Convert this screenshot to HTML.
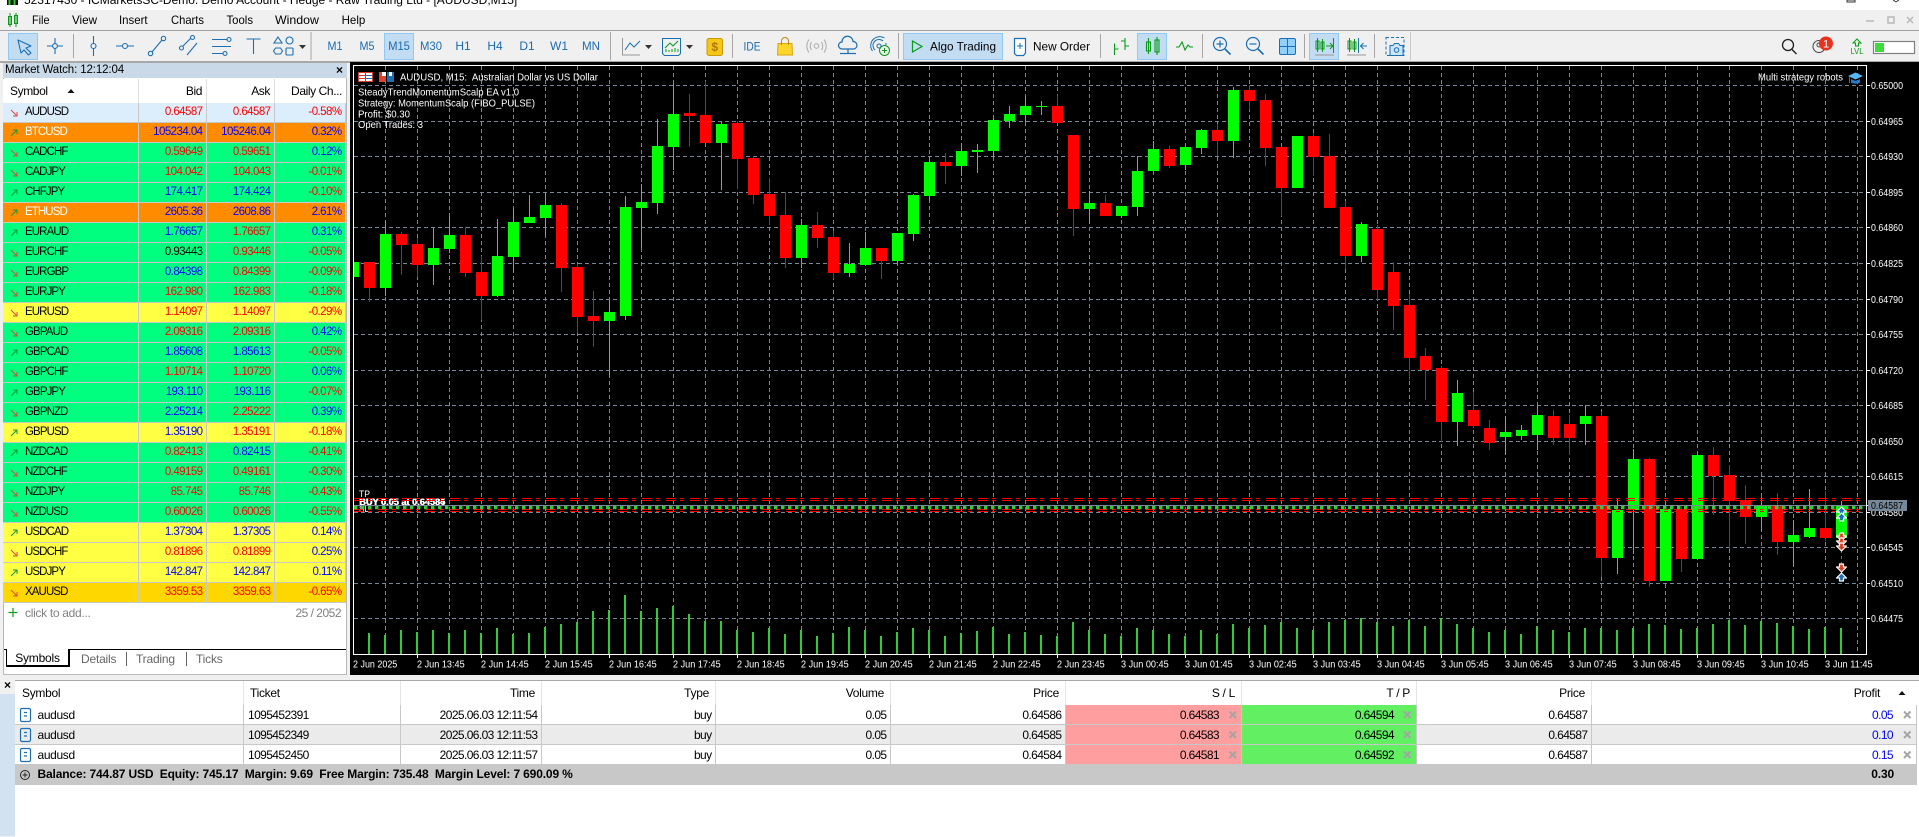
<!DOCTYPE html>
<html lang="en"><head><meta charset="utf-8"><title>MetaTrader 5</title>
<style>
html,body{margin:0;padding:0;width:1919px;height:836px;overflow:hidden;background:#f0f0f0;font-family:"Liberation Sans",sans-serif;color:#000}
.abs{position:absolute}
#title{left:0;top:0;width:1919px;height:10px;background:#fff;overflow:hidden}
#title span{position:absolute;left:24px;top:-7px;font-size:12px;line-height:14px;white-space:nowrap;letter-spacing:-.02px}
#menu{left:0;top:10px;width:1919px;height:20px;background:#f0f0f0;border-bottom:1px solid #a0a0a0}
#tool{left:0;top:31px;width:1919px;height:30px;background:#f0f0f0;border-bottom:2px solid #a8a8a8}
.sel{position:absolute;top:33px;height:25px;background:#c2dcf2;border:1px solid #90c8f6}
#mwt{left:3px;top:63px;width:344px;height:15px;background:#c9d9e7;font-size:11.5px;line-height:15px}
#mwt span{position:absolute;left:2px;top:0;white-space:nowrap;letter-spacing:-.12px}
#mwt b{position:absolute;right:4px;top:0;font-size:12px}
#mw{left:3px;top:78px;width:344px;height:597px;background:#fff;border-left:1px solid #b8b8b8;border-right:1px solid #b8b8b8;border-bottom:1px solid #b8b8b8;box-sizing:border-box}
table{border-collapse:separate;border-spacing:0;table-layout:fixed}
#mwtab{position:absolute;left:-1px;top:1px;width:343px;font-size:11.5px;letter-spacing:-.56px}
#mwtab th{height:24px;font-weight:normal;background:#fff;border-right:1px solid #e0e0e0;text-align:right;padding:0 4px 0 0;box-sizing:border-box;font-size:12px;letter-spacing:-.4px}
#mwtab td{height:20px;padding:0 3.5px 0 0;box-sizing:border-box;text-align:right;border-right:1px solid #c8c8c8;border-bottom:1px solid #c8c8c8;white-space:nowrap;overflow:hidden;line-height:19px}
#mwtab td:first-child{text-align:left;padding-left:22px;letter-spacing:-.9px;position:relative}
#mwtab td:first-child svg{position:absolute;left:7px;top:6px;width:8px;height:8px}
.u path{stroke:#159a30;fill:none;stroke-width:1}.d path{stroke:#e0483c;fill:none;stroke-width:1}
.l{background:#dcedfb}.o{background:#ff8c00}.o td:first-child{color:#fff}.g{background:#00ff7f}.y{background:#ffff44}.a{background:#ffd700}
.r{color:#f00}.b{color:#00f}
#add{left:25px;top:606px;font-size:12px;color:#808080;letter-spacing:-.3px}
#cnt{left:290px;top:606px;width:51px;text-align:right;font-size:12px;color:#808080;letter-spacing:-.5px;white-space:nowrap}
.tabline{left:4px;top:649px;width:342px;height:1px;background:#000}
#tsym{left:6px;top:649px;width:64px;height:18px;background:#fff;border:1px solid #000;border-top:0;box-sizing:border-box;border-width:0 2px 2px 1px;font-size:12px;text-align:center;line-height:19px;letter-spacing:-.2px}
.tab{top:652px;font-size:12px;color:#666;line-height:14px;letter-spacing:-.2px}
.tsep{top:652px;width:1px;height:14px;background:#666}
#side{left:0;top:694px;width:15px;height:142px;background:#d3e2f0}
#tbx{left:15px;top:680px;width:1904px;height:156px;background:#fff;border-top:1px solid #a8a8a8}
#ot{position:absolute;left:0;top:0;width:1902px;font-size:12px;letter-spacing:-.6px}
#ot th{height:24px;font-weight:normal;text-align:right;padding:0 6px 0 0;border-right:1px solid #e6e6e6;box-sizing:border-box;letter-spacing:-.3px}
#ot td{height:20px;padding:1px 3.5px 0 0;text-align:right;border-right:1px solid #c8c8c8;border-bottom:1px solid #c8c8c8;box-sizing:border-box;position:relative;line-height:18px;white-space:nowrap}
#ot td.sym{text-align:left;padding-left:22.5px;letter-spacing:-.35px}
#ot td.tk{text-align:left;padding-left:4px}
#ot .x{background:#ebebeb}
#ot td.sl{background:#ff9e9e;padding-right:22px}#ot td.tp{background:#62f062;padding-right:22px}
#ot td.pf{padding-right:23px;color:#00f}
#sum{left:15px;top:764px;width:1902px;height:21px;background:#c8c8c8;font-size:12px;font-weight:bold;line-height:21px;white-space:pre;letter-spacing:-.15px}
#sum span{position:absolute;left:22.5px}
#sum em{position:absolute;right:23px;font-style:normal}
#ico{left:0;top:0;width:1919px;height:836px}
</style></head><body>
<div class="abs" id="title"><span>52317430 - ICMarketsSC-Demo: Demo Account - Hedge - Raw Trading Ltd - [AUDUSD,M15]</span></div>
<div class="abs" id="menu"></div>
<div class="abs" id="tool"></div>
<div class="sel" style="left:8px;width:28px"></div>
<div class="sel" style="left:384px;width:28px"></div>
<div class="sel" style="left:903px;width:98px"></div>
<div class="sel" style="left:1137px;width:28px"></div>
<div class="sel" style="left:1309px;width:28px"></div>

<div class="abs" id="mwt"><span>Market Watch: 12:12:04</span><b>×</b></div>
<div class="abs" id="mw">
<table id="mwtab"><colgroup><col style="width:136px"><col style="width:68px"><col style="width:68px"><col style="width:71px"></colgroup>
<tr><th style="text-align:left;padding-left:7px">Symbol</th><th>Bid</th><th>Ask</th><th style="border-right:0">Daily Ch...</th></tr>
<tr class="l"><td><svg class="d" viewBox="0 0 8 8"><path d="M1 1L7 7M3 7h4V3"/></svg>AUDUSD</td><td class="r">0.64587</td><td class="r">0.64587</td><td class="r">-0.58%</td></tr>
<tr class="o"><td><svg class="u" viewBox="0 0 8 8"><path d="M1 7L7 1M3 1h4v4"/></svg>BTCUSD</td><td class="b">105234.04</td><td class="b">105246.04</td><td class="b">0.32%</td></tr>
<tr class="g"><td><svg class="d" viewBox="0 0 8 8"><path d="M1 1L7 7M3 7h4V3"/></svg>CADCHF</td><td class="r">0.59649</td><td class="r">0.59651</td><td class="b">0.12%</td></tr>
<tr class="g"><td><svg class="d" viewBox="0 0 8 8"><path d="M1 1L7 7M3 7h4V3"/></svg>CADJPY</td><td class="r">104.042</td><td class="r">104.043</td><td class="r">-0.01%</td></tr>
<tr class="g"><td><svg class="u" viewBox="0 0 8 8"><path d="M1 7L7 1M3 1h4v4"/></svg>CHFJPY</td><td class="b">174.417</td><td class="b">174.424</td><td class="r">-0.10%</td></tr>
<tr class="o"><td><svg class="u" viewBox="0 0 8 8"><path d="M1 7L7 1M3 1h4v4"/></svg>ETHUSD</td><td class="b">2605.36</td><td class="b">2608.86</td><td class="b">2.61%</td></tr>
<tr class="g"><td><svg class="u" viewBox="0 0 8 8"><path d="M1 7L7 1M3 1h4v4"/></svg>EURAUD</td><td class="b">1.76657</td><td class="r">1.76657</td><td class="b">0.31%</td></tr>
<tr class="g"><td><svg class="d" viewBox="0 0 8 8"><path d="M1 1L7 7M3 7h4V3"/></svg>EURCHF</td><td>0.93443</td><td class="r">0.93446</td><td class="r">-0.05%</td></tr>
<tr class="g"><td><svg class="d" viewBox="0 0 8 8"><path d="M1 1L7 7M3 7h4V3"/></svg>EURGBP</td><td class="b">0.84398</td><td class="r">0.84399</td><td class="r">-0.09%</td></tr>
<tr class="g"><td><svg class="d" viewBox="0 0 8 8"><path d="M1 1L7 7M3 7h4V3"/></svg>EURJPY</td><td class="r">162.980</td><td class="r">162.983</td><td class="r">-0.18%</td></tr>
<tr class="y"><td><svg class="d" viewBox="0 0 8 8"><path d="M1 1L7 7M3 7h4V3"/></svg>EURUSD</td><td class="r">1.14097</td><td class="r">1.14097</td><td class="r">-0.29%</td></tr>
<tr class="g"><td><svg class="d" viewBox="0 0 8 8"><path d="M1 1L7 7M3 7h4V3"/></svg>GBPAUD</td><td class="r">2.09316</td><td class="r">2.09316</td><td class="b">0.42%</td></tr>
<tr class="g"><td><svg class="u" viewBox="0 0 8 8"><path d="M1 7L7 1M3 1h4v4"/></svg>GBPCAD</td><td class="b">1.85608</td><td class="b">1.85613</td><td class="r">-0.05%</td></tr>
<tr class="g"><td><svg class="d" viewBox="0 0 8 8"><path d="M1 1L7 7M3 7h4V3"/></svg>GBPCHF</td><td class="r">1.10714</td><td class="r">1.10720</td><td class="b">0.06%</td></tr>
<tr class="g"><td><svg class="u" viewBox="0 0 8 8"><path d="M1 7L7 1M3 1h4v4"/></svg>GBPJPY</td><td class="b">193.110</td><td class="b">193.116</td><td class="r">-0.07%</td></tr>
<tr class="g"><td><svg class="d" viewBox="0 0 8 8"><path d="M1 1L7 7M3 7h4V3"/></svg>GBPNZD</td><td class="b">2.25214</td><td class="r">2.25222</td><td class="b">0.39%</td></tr>
<tr class="y"><td><svg class="u" viewBox="0 0 8 8"><path d="M1 7L7 1M3 1h4v4"/></svg>GBPUSD</td><td class="b">1.35190</td><td class="r">1.35191</td><td class="r">-0.18%</td></tr>
<tr class="g"><td><svg class="u" viewBox="0 0 8 8"><path d="M1 7L7 1M3 1h4v4"/></svg>NZDCAD</td><td class="r">0.82413</td><td class="b">0.82415</td><td class="r">-0.41%</td></tr>
<tr class="g"><td><svg class="d" viewBox="0 0 8 8"><path d="M1 1L7 7M3 7h4V3"/></svg>NZDCHF</td><td class="r">0.49159</td><td class="r">0.49161</td><td class="r">-0.30%</td></tr>
<tr class="g"><td><svg class="d" viewBox="0 0 8 8"><path d="M1 1L7 7M3 7h4V3"/></svg>NZDJPY</td><td class="r">85.745</td><td class="r">85.746</td><td class="r">-0.43%</td></tr>
<tr class="g"><td><svg class="d" viewBox="0 0 8 8"><path d="M1 1L7 7M3 7h4V3"/></svg>NZDUSD</td><td class="r">0.60026</td><td class="r">0.60026</td><td class="r">-0.55%</td></tr>
<tr class="y"><td><svg class="u" viewBox="0 0 8 8"><path d="M1 7L7 1M3 1h4v4"/></svg>USDCAD</td><td class="b">1.37304</td><td class="b">1.37305</td><td class="b">0.14%</td></tr>
<tr class="y"><td><svg class="d" viewBox="0 0 8 8"><path d="M1 1L7 7M3 7h4V3"/></svg>USDCHF</td><td class="r">0.81896</td><td class="r">0.81899</td><td class="b">0.25%</td></tr>
<tr class="y"><td><svg class="u" viewBox="0 0 8 8"><path d="M1 7L7 1M3 1h4v4"/></svg>USDJPY</td><td class="b">142.847</td><td class="b">142.847</td><td class="b">0.11%</td></tr>
<tr class="a"><td><svg class="d" viewBox="0 0 8 8"><path d="M1 1L7 7M3 7h4V3"/></svg>XAUUSD</td><td class="r">3359.53</td><td class="r">3359.63</td><td class="r">-0.65%</td></tr>
</table></div>
<div class="abs" id="add">click to add...</div>
<div class="abs" id="cnt">25 / 2052</div>
<div class="abs tabline"></div>
<div class="abs" id="tsym">Symbols</div>
<div class="abs tab" style="left:81px">Details</div><div class="abs tsep" style="left:126px"></div>
<div class="abs tab" style="left:136px">Trading</div><div class="abs tsep" style="left:186px"></div>
<div class="abs tab" style="left:196px">Ticks</div>

<!-- chart background -->
<div class="abs" style="left:350px;top:62px;width:1569px;height:613px;background:#000"></div>

<div class="abs" id="side"></div>
<div class="abs" id="tbx">
<table id="ot"><colgroup><col style="width:229px"><col style="width:157px"><col style="width:141px"><col style="width:174px"><col style="width:175px"><col style="width:175px"><col style="width:176px"><col style="width:175px"><col style="width:175px"><col style="width:325px"></colgroup>
<tr><th style="text-align:left;padding-left:7px">Symbol</th><th style="text-align:left;padding-left:6px">Ticket</th><th>Time</th><th>Type</th><th>Volume</th><th>Price</th><th>S / L</th><th>T / P</th><th>Price</th><th style="padding-right:37px;border-right:0">Profit</th></tr>
<tr><td class="sym">audusd</td><td class="tk">1095452391</td><td>2025.06.03 12:11:54</td><td>buy</td><td>0.05</td><td>0.64586</td><td class="sl">0.64583</td><td class="tp">0.64594</td><td>0.64587</td><td class="pf">0.05</td></tr>
<tr class="x"><td class="sym">audusd</td><td class="tk">1095452349</td><td>2025.06.03 12:11:53</td><td>buy</td><td>0.05</td><td>0.64585</td><td class="sl">0.64583</td><td class="tp">0.64594</td><td>0.64587</td><td class="pf">0.10</td></tr>
<tr><td class="sym">audusd</td><td class="tk">1095452450</td><td>2025.06.03 12:11:57</td><td>buy</td><td>0.05</td><td>0.64584</td><td class="sl">0.64581</td><td class="tp">0.64592</td><td>0.64587</td><td class="pf">0.15</td></tr>
</table></div>
<div class="abs" id="sum"><span>Balance: 744.87 USD  Equity: 745.17  Margin: 9.69  Free Margin: 735.48  Margin Level: 7 690.09 %</span><em>0.30</em></div>
<div class="abs" style="left:4px;top:678px;font-size:12px;font-weight:bold">×</div>

<svg class="abs" id="ico" viewBox="0 0 1919 836" xmlns="http://www.w3.org/2000/svg" font-family="Liberation Sans, sans-serif">
<defs><clipPath id="cp"><rect x="354" y="66" width="1512" height="588"/></clipPath></defs>
<!-- title icon -->
<rect x="7" y="0" width="11" height="5" fill="#111"/><path d="M9.5 0v5M14.5 0v5" stroke="#2c2" stroke-width="2"/>
<!-- menu -->
<g stroke="#0a9a1a" fill="none"><rect x="8.5" y="16.5" width="3" height="8"/><rect x="14.5" y="15.5" width="3" height="8"/><path d="M10 13v14M16 13v14"/></g>
<g font-size="12" fill="#000"><text x="32" y="24" textLength="17.5" lengthAdjust="spacingAndGlyphs">File</text><text x="72" y="24" textLength="25" lengthAdjust="spacingAndGlyphs">View</text><text x="119" y="24" textLength="28.6" lengthAdjust="spacingAndGlyphs">Insert</text><text x="171" y="24" textLength="33" lengthAdjust="spacingAndGlyphs">Charts</text><text x="226.5" y="24" textLength="26.5" lengthAdjust="spacingAndGlyphs">Tools</text><text x="275" y="24" textLength="44" lengthAdjust="spacingAndGlyphs">Window</text><text x="341.6" y="24" textLength="23.7" lengthAdjust="spacingAndGlyphs">Help</text></g>
<g stroke="#b8b8b8" stroke-width="1.5" fill="none"><path d="M1866 21h8"/><rect x="1888" y="17" width="6" height="6"/><path d="M1907 17l6 6M1913 17l-6 6"/></g>
<rect x="1847" y="0" width="8" height="2" fill="none" stroke="#333"/><path d="M1893 0l3 2M1899 0l-3 2" stroke="#333"/>

<!-- toolbar separators -->
<g stroke="#a6a6a6"><path d="M73.5 34V58M311 32V60M610.5 32V60M732.5 34V58M898.5 33V59M1100.5 34V58M1202.5 34V58M1304.5 34V58M1374.5 34V58"/><path d="M1410.5 32V60" stroke="#c8c8c8"/></g>
<!-- draw tools -->
<g stroke="#1a6fb5" fill="none" stroke-width="1.1">
<path d="M18 40L31 46L26 48L31 53L28.5 55L24 50L21 53Z" stroke-linejoin="round"/>
<path d="M47 46H52.5M57.5 46H63M55 38V43.5M55 48.5V54"/><circle cx="55" cy="46" r="2.4"/>
<path d="M93.5 36V43.5M93.5 48.5V56"/><circle cx="93.5" cy="46" r="2.5"/>
<path d="M116 46H122.5M127.5 46H134"/><circle cx="125" cy="46" r="2.5"/>
<path d="M152 52L162 40"/><circle cx="150.5" cy="53.5" r="2.2"/><circle cx="163.5" cy="38.500" r="2.2"/>
<path d="M183 46L191 38M187 55L197 43"/><circle cx="181.5" cy="48" r="2"/><circle cx="192.5" cy="37.5" r="2"/>
<path d="M212 39.5H227M212 46.5H231M212 53.5H223"/><circle cx="229" cy="39.5" r="2"/><circle cx="225" cy="53.5" r="2"/>
<path d="M246.5 39H260.5M253.5 39V54"/>
<path d="M278 37L282 43H274Z"/><circle cx="289.5" cy="40.5" r="3.5"/><path d="M275.5 48h5l2 3l-2 3h-5l-2-3z"/><rect x="286" y="48" width="7" height="7" rx="1"/>
</g>
<path d="M299 45h7l-3.5 4z" fill="#333"/>
<g font-size="12" fill="#1c6bb0" text-anchor="middle"><text x="335" y="50" textLength="15" lengthAdjust="spacingAndGlyphs">M1</text><text x="367" y="50" textLength="15" lengthAdjust="spacingAndGlyphs">M5</text><text x="399" y="50" textLength="21.6" lengthAdjust="spacingAndGlyphs">M15</text><text x="431" y="50" textLength="22" lengthAdjust="spacingAndGlyphs">M30</text><text x="463" y="50">H1</text><text x="495" y="50">H4</text><text x="527" y="50">D1</text><text x="559" y="50">W1</text><text x="591" y="50" textLength="18" lengthAdjust="spacingAndGlyphs">MN</text></g>
<!-- chart line icon -->
<path d="M622.5 38V55H640" stroke="#999" fill="none"/><path d="M625 50L630 43L634 47L640 41" stroke="#1a6fb5" fill="none"/>
<path d="M645 45h7l-3.5 4z" fill="#333"/><path d="M686 45h7l-3.5 4z" fill="#333"/>
<g fill="none"><path d="M662.5 38.5h18v15l-2 2h-14l-2-2z" stroke="#1a6fb5"/><path d="M665 48L670 43L673 46L678 41" stroke="#0a9a1a"/><path d="M666 52v-3M669 52v-2M672 52v-3M675 52v-4M678 52v-3" stroke="#0a9a1a"/></g>
<rect x="707" y="38.5" width="15.5" height="17" rx="2" fill="#f5c518" stroke="#c89b00"/><text x="714.7" y="51" font-size="12" font-weight="bold" text-anchor="middle" fill="#b07a00">$</text>
<text x="752" y="50.5" font-size="12" fill="#1c6bb0" text-anchor="middle" textLength="17" lengthAdjust="spacingAndGlyphs">IDE</text>
<path d="M778 43.5h14l.5 11.5h-15z" fill="#ffd52a" stroke="#d8a810"/><path d="M781.5 45V41a3.3 3.300 0 0 1 7 0v4" stroke="#b88a10" fill="none"/>
<g fill="none" stroke="#b0b0b0" stroke-width="1.1"><circle cx="816.5" cy="46" r="2.3"/><path d="M811.5 42a7 7 0 0 0 0 8M821.5 42a7 7 0 0 1 0 8M809 39.5a11 11 0 0 0 0 13M824 39.5a11 11 0 0 1 0 13"/></g>
<g fill="none" stroke="#1a6fb5" stroke-width="1.2"><path d="M842 49a3.5 3.5 0 0 1 0-7a5.5 5.5 0 0 1 11-.5a3.8 3.8 0 0 1 1 7.5z"/><path d="M848 49v4M840 53.5h16"/></g>
<g fill="none" stroke="#1a6fb5"><circle cx="879" cy="46" r="2"/><path d="M875 50a6 6 0 0 1 8-9M872.5 51a9 9 0 0 1 12-13M886 43v2"/></g>
<circle cx="884.5" cy="50.5" r="5" fill="#f0f0f0" stroke="#0a9a1a"/><path d="M882 50.5h5M884.5 48v5" stroke="#0a9a1a"/>
<path d="M912.5 41L922 46.5L912.5 52Z" fill="none" stroke="#0a9a1a" stroke-width="1.2"/>
<text x="930" y="50.5" font-size="12" textLength="66" lengthAdjust="spacingAndGlyphs">Algo Trading</text>
<path d="M1014.5 38.5h11v14.5l-2 2.500h-7l-2-2z" fill="#fff" stroke="#1a6fb5" stroke-width="1.2"/><path d="M1017 46h6M1020 43v6" stroke="#1a6fb5"/>
<text x="1033" y="50.5" font-size="12" textLength="57" lengthAdjust="spacingAndGlyphs">New Order</text>
<g stroke="#0a9a1a" fill="none" stroke-width="1.1"><path d="M1114.5 43.5V55M1114.5 49h4M1125 38V50M1121 41h4M1125 46h4"/>
<rect x="1146.5" y="42" width="4" height="9"/><rect x="1155" y="40" width="4" height="12"/><path d="M1148.5 38V54M1157 37V55"/>
<path d="M1176 47l3 0l3-5l3 8l3-5l2 2h3"/></g>
<g fill="none" stroke="#1a6fb5" stroke-width="1.2"><circle cx="1220" cy="44" r="6.5"/><path d="M1216.5 44h7M1220 40.5v7"/><path d="M1225 49l5.5 5.5" stroke-width="1.6"/>
<circle cx="1253" cy="44" r="6.5"/><path d="M1249.5 44h7"/><path d="M1258 49l5.5 5.5" stroke-width="1.6"/></g>
<rect x="1279.5" y="38.5" width="16" height="16" rx="1.5" fill="#8fd0ff" stroke="#1a6fb5"/><path d="M1287.5 38.5v16M1279.5 46.5h16" stroke="#1a6fb5"/>
<g stroke="#0a9a1a" fill="none"><rect x="1316" y="41" width="3" height="8"/><path d="M1317.5 38V52"/><rect x="1321" y="42" width="3" height="7"/><path d="M1322.5 39V52"/></g>
<path d="M1326 46h7M1330 43l3 3l-3 3" stroke="#0a9a1a" fill="none"/><path d="M1333.5 38v15" stroke="#1a6fb5"/><path d="M1315 55h19" stroke="#999"/>
<g stroke="#0a9a1a" fill="none"><rect x="1348" y="41" width="3" height="8"/><path d="M1349.5 38V52"/><rect x="1353" y="42" width="3" height="7"/><path d="M1354.5 39V52"/></g>
<path d="M1358.5 38v15" stroke="#1a6fb5"/><path d="M1367 46h-6M1363.5 43l-3 3l3 3" stroke="#1a6fb5" fill="none"/><path d="M1347 55h19" stroke="#999"/>
<rect x="1386" y="37.5" width="18" height="18" fill="none" stroke="#1a6fb5" stroke-dasharray="3 2"/>
<path d="M1390 45.5h3l1.5-2h4l1.5 2h3v10h-13z" fill="#cfe6fa" stroke="#1a6fb5"/><circle cx="1396.5" cy="50" r="2.3" fill="none" stroke="#1a6fb5"/>
<circle cx="1788" cy="45" r="5.5" fill="none" stroke="#222" stroke-width="1.3"/><path d="M1792 49.5l4.5 4.5" stroke="#222" stroke-width="1.4"/>
<circle cx="1819" cy="46.5" r="6" fill="none" stroke="#444"/><circle cx="1819" cy="45" r="2" fill="none" stroke="#444"/>
<circle cx="1826" cy="43.5" r="7" fill="#e8321e"/><text x="1826" y="47.5" font-size="11" fill="#fff" text-anchor="middle">1</text>
<path d="M1857 39l4 4h-2.5v3h-3v-3H1853z" fill="#dff5df" stroke="#0a9a1a"/><text x="1857" y="54" font-size="8.5" fill="#0a9a1a" text-anchor="middle" textLength="13" lengthAdjust="spacingAndGlyphs">LVL</text>
<rect x="1873.5" y="41.5" width="41" height="12" fill="#fff" stroke="#808080" stroke-width="1.2"/><rect x="1875" y="43" width="9" height="9" fill="#3cdc3c"/>

<!-- chart frame -->
<g stroke="#778899" stroke-dasharray="4 3" fill="none">
<path d="M354 85.5H1866M354 121.5H1866M354 156.5H1866M354 192.5H1866M354 227.5H1866M354 263.5H1866M354 299.5H1866M354 334.5H1866M354 370.5H1866M354 405.5H1866M354 441.5H1866M354 476.5H1866M354 512.5H1866M354 547.5H1866M354 583.5H1866M354 618.5H1866"/>
<path d="M385.5 66V654M417.5 66V654M449.5 66V654M481.5 66V654M513.5 66V654M545.5 66V654M577.5 66V654M609.5 66V654M641.5 66V654M673.5 66V654M705.5 66V654M737.5 66V654M769.5 66V654M801.5 66V654M833.5 66V654M865.5 66V654M897.5 66V654M929.5 66V654M961.5 66V654M993.5 66V654M1025.5 66V654M1057.5 66V654M1089.5 66V654M1121.5 66V654M1153.5 66V654M1185.5 66V654M1217.5 66V654M1249.5 66V654M1281.5 66V654M1313.5 66V654M1345.5 66V654M1377.5 66V654M1409.5 66V654M1441.5 66V654M1473.5 66V654M1505.5 66V654M1537.5 66V654M1569.5 66V654M1601.5 66V654M1633.5 66V654M1665.5 66V654M1697.5 66V654M1729.5 66V654M1761.5 66V654M1793.5 66V654M1825.5 66V654M1857.5 66V654"/>
</g>
<!-- volumes -->
<path stroke="#32cd32" stroke-width="2" fill="none" d="M369 633V654M385 635V654M401 630V654M417 632V654M433 630V654M449 633V654M465 630V654M481 633V654M497 628V654M513 634V654M529 633V654M545 627V654M561 624V654M577 622V654M593 611V654M609 610V654M625 595V654M641 611V654M657 608V654M673 606V654M689 614V654M705 621V654M721 621V654M737 630V654M753 632V654M769 628V654M785 634V654M801 630V654M817 636V654M833 633V654M849 627V654M865 630V654M881 636V654M897 632V654M913 628V654M929 630V654M945 636V654M961 633V654M977 631V654M993 627V654M1009 634V654M1025 632V654M1041 635V654M1057 636V654M1073 622V654M1089 630V654M1105 634V654M1121 636V654M1137 628V654M1153 630V654M1169 634V654M1185 636V654M1201 630V654M1217 634V654M1233 624V654M1249 628V654M1265 625V654M1281 622V654M1297 628V654M1313 630V654M1329 622V654M1345 620V654M1361 618V654M1377 622V654M1393 626V654M1409 620V654M1425 626V654M1441 618V654M1457 624V654M1473 628V654M1489 632V654M1505 630V654M1521 634V654M1537 626V654M1553 630V654M1569 632V654M1585 628V654M1601 628V654M1617 630V654M1633 628V654M1649 624V654M1665 625V654M1681 629V654M1697 628V654M1713 624V654M1729 620V654M1745 625V654M1761 621V654M1777 623V654M1793 626V654M1809 629V654M1825 627V654M1841 628V654"/>
<!-- candles -->
<g clip-path="url(#cp)" fill="none">
<rect x="354" y="262" width="5" height="15" fill="#0f0"/>
<path stroke="#0f0" d="M385.5 221V296M433.5 227V285M449.5 216V253M497.5 219V297M513.5 209V272M529.5 195V223M545.5 192V236M609.5 300V377M625.5 196V320M641.5 184V248M657.5 119V214M673.5 83V170M721.5 122V190M801.5 219V268M849.5 243V277M865.5 232V265M897.5 233V265M913.5 194V241M929.5 156V201M961.5 143V176M977.5 144V173M993.5 118V158M1009.5 106V128M1025.5 96V122M1041.5 101V115M1089.5 191V224M1121.5 206V218M1137.5 156V216M1153.5 141V171M1185.5 147V170M1201.5 129V154M1233.5 87V158M1297.5 136V188M1361.5 222V262M1457.5 380V446M1505.5 417V455M1521.5 425V440M1537.5 405V450M1585.5 405V445M1617.5 498V574M1633.5 449V554M1665.5 503V581M1697.5 454V559M1761.5 497V531M1793.5 520V566M1809.5 489V538M1841.5 501V538"/>
<path stroke="#f00" d="M369.5 262V302M401.5 232V275M417.5 238V277M465.5 227V277M481.5 256V320M561.5 203V292M577.5 264V333M593.5 291V347M689.5 94V147M705.5 81V143M737.5 121V189M753.5 156V204M769.5 178V225M785.5 192V268M817.5 212V248M833.5 231V279M881.5 248V279M945.5 153V184M1057.5 95V123M1073.5 135V236M1105.5 195V216M1169.5 146V168M1217.5 124V156M1249.5 85V110M1265.5 94V166M1281.5 147V216M1313.5 133V176M1329.5 134V208M1345.5 201V269M1377.5 225V300M1393.5 262V330M1409.5 294V380M1425.5 348V400M1441.5 366V442M1473.5 392V428M1489.5 420V450M1553.5 410V445M1569.5 415V455M1601.5 412V577M1649.5 458V587M1681.5 507V572M1713.5 447V515M1729.5 465V549M1745.5 485V544M1777.5 493V555M1825.5 491V541"/>
<path stroke="#0f0" stroke-width="11" d="M385.5 234V288M433.5 248V265M449.5 235V249M497.5 256V296M513.5 222V257M529.5 217V223M545.5 205V218M609.5 312V321M625.5 207V316M641.5 202V208M657.5 146V203M673.5 114V147M721.5 124V143M801.5 225V258M849.5 264V273M865.5 248V265M897.5 233V261M913.5 195V234M929.5 162V196M961.5 151V166M977.5 150V152M993.5 120V151M1009.5 114V121M1025.5 106V115M1041.5 106V107M1089.5 203V209M1121.5 206V216M1137.5 171V207M1153.5 149V171M1185.5 147V165M1201.5 130V148M1233.5 90V141M1297.5 136V188M1361.5 224V256M1457.5 393V422M1505.5 432V437M1521.5 430V436M1537.5 415V435M1585.5 416V424M1617.5 510V558M1633.5 459V510M1665.5 509V581M1697.5 455V559M1761.5 505V517M1793.5 535V542M1809.5 528V537M1841.5 506V538"/>
<path stroke="#f00" stroke-width="11" d="M369.5 262V288M401.5 234V245M417.5 244V265M465.5 235V273M481.5 272V296M561.5 205V268M577.5 267V317M593.5 316V321M689.5 113V116M705.5 115V143M737.5 123V159M753.5 158V195M769.5 194V216M785.5 215V258M817.5 225V238M833.5 237V273M881.5 248V261M945.5 162V166M1057.5 106V123M1073.5 135V209M1105.5 203V216M1169.5 149V166M1217.5 130V141M1249.5 90V101M1265.5 100V148M1281.5 147V188M1313.5 136V157M1329.5 156V208M1345.5 207V256M1377.5 229V290M1393.5 272V306M1409.5 305V358M1425.5 356V370M1441.5 368V422M1473.5 410V426M1489.5 428V443M1553.5 416V438M1569.5 424V438M1601.5 416V558M1649.5 459V581M1681.5 509V559M1713.5 455V476M1729.5 475V501M1745.5 500V517M1777.5 505V542M1825.5 528V538"/>
</g>
<!-- trade labels -->
<g font-size="9.5" fill="#fff" font-weight="bold"><text x="359" y="497" font-weight="normal" textLength="11" lengthAdjust="spacingAndGlyphs">TP</text><text x="359" y="505" textLength="86" lengthAdjust="spacingAndGlyphs">BUY 0.05 at 0.64584</text><text x="359.6" y="505" textLength="86" lengthAdjust="spacingAndGlyphs">BUY 0.05 at 0.64585</text><text x="359" y="512" font-weight="normal" textLength="10" lengthAdjust="spacingAndGlyphs">SL</text></g>
<!-- order lines -->
<g fill="none" stroke="#f00" stroke-dasharray="9 5 4 6"><path d="M354 498.5H1866M354 500.5H1866M354 509.5H1866M354 511.5H1866"/></g>
<path d="M354 507.5H1866" stroke="#32cd32" stroke-width="3.5" stroke-dasharray="3.5 3.5" fill="none"/>
<path d="M354 505.5H1866" stroke="#778899" fill="none"/>
<!-- white frame -->
<g stroke="#fff" fill="none"><path d="M353.5 65.5H1866.5V654.5H353.5Z"/></g>
<path d="M1841.5 520V574" stroke="#e04020" stroke-dasharray="3 3"/>
<g stroke="#fff" stroke-width="1.2" stroke-linejoin="round">
<path d="M1841.5 507l5 5h-3v3h-4v-3h-3z" fill="#1a6fb5"/>
<path d="M1841.5 513l5 5h-3v3h-4v-3h-3z" fill="#1a6fb5"/>
<path d="M1841.5 541l5-5h-3v-3h-4v3h-3z" fill="#e04020"/>
<path d="M1841.5 546l5-5h-3v-3h-4v3h-3z" fill="#e04020"/>
<path d="M1841.5 551l5-5h-3v-3h-4v3h-3z" fill="#e04020"/>
<path d="M1841.5 572l5-5h-3v-3h-4v3h-3z" fill="#e04020"/>
<path d="M1841.5 573l5 5h-3v3h-4v-3h-3z" fill="#1a6fb5"/>
</g>
<!-- chart header -->
<rect x="358.5" y="72.5" width="14" height="9" fill="#fff" stroke="#d83c2c"/><path d="M359 75.5h6M359 78.5h6" stroke="#d83c2c"/><path d="M366 75.5h6M366 78.5h6" stroke="#1a6fb5"/><path d="M365.5 73v8" stroke="#1a6fb5"/>
<rect x="379" y="72" width="7" height="10" fill="#e0402c"/><rect x="387" y="72" width="7" height="10" fill="#1a6fb5"/><rect x="382" y="72" width="4" height="4" fill="#fff"/><rect x="389" y="72" width="3" height="4" fill="#fff"/>
<g font-size="10.5" fill="#fff">
<text x="400" y="80.5" textLength="198" lengthAdjust="spacingAndGlyphs" xml:space="preserve">AUDUSD, M15:  Australian Dollar vs US Dollar</text>
<text x="358" y="95.5" textLength="161" lengthAdjust="spacingAndGlyphs">SteadyTrendMomentumScalp EA v1.0</text>
<text x="358" y="106.5" textLength="177" lengthAdjust="spacingAndGlyphs">Strategy: MomentumScalp (FIBO_PULSE)</text>
<text x="358" y="117.5" textLength="52" lengthAdjust="spacingAndGlyphs">Profit: $0.30</text>
<text x="358" y="128" textLength="65" lengthAdjust="spacingAndGlyphs">Open Trades: 3</text>
<text x="1758" y="80.5" textLength="85" lengthAdjust="spacingAndGlyphs">Multi strategy robots</text>
</g>
<path d="M1848 76l7.5-3.5l7.5 3.5l-7.5 3.5z" fill="#5ab4f0"/><path d="M1851 79v3.5c2 1.5 7 1.5 9 0V79l-4.5 2z" fill="#1a7fd0"/><path d="M1849.5 77v6" stroke="#1a7fd0"/>
<!-- price axis -->
<path stroke="#fff" d="M1866 85.5h4M1866 121.5h4M1866 156.5h4M1866 192.5h4M1866 227.5h4M1866 263.5h4M1866 299.5h4M1866 334.5h4M1866 370.5h4M1866 405.5h4M1866 441.5h4M1866 476.5h4M1866 512.5h4M1866 547.5h4M1866 583.5h4M1866 618.5h4"/>
<g font-size="10" fill="#fff">
<text x="1871" y="89" textLength="32" lengthAdjust="spacingAndGlyphs">0.65000</text>
<text x="1871" y="125" textLength="32" lengthAdjust="spacingAndGlyphs">0.64965</text>
<text x="1871" y="160" textLength="32" lengthAdjust="spacingAndGlyphs">0.64930</text>
<text x="1871" y="196" textLength="32" lengthAdjust="spacingAndGlyphs">0.64895</text>
<text x="1871" y="231" textLength="32" lengthAdjust="spacingAndGlyphs">0.64860</text>
<text x="1871" y="267" textLength="32" lengthAdjust="spacingAndGlyphs">0.64825</text>
<text x="1871" y="303" textLength="32" lengthAdjust="spacingAndGlyphs">0.64790</text>
<text x="1871" y="338" textLength="32" lengthAdjust="spacingAndGlyphs">0.64755</text>
<text x="1871" y="374" textLength="32" lengthAdjust="spacingAndGlyphs">0.64720</text>
<text x="1871" y="409" textLength="32" lengthAdjust="spacingAndGlyphs">0.64685</text>
<text x="1871" y="445" textLength="32" lengthAdjust="spacingAndGlyphs">0.64650</text>
<text x="1871" y="480" textLength="32" lengthAdjust="spacingAndGlyphs">0.64615</text>
<text x="1871" y="516" textLength="32" lengthAdjust="spacingAndGlyphs">0.64580</text>
<text x="1871" y="551" textLength="32" lengthAdjust="spacingAndGlyphs">0.64545</text>
<text x="1871" y="587" textLength="32" lengthAdjust="spacingAndGlyphs">0.64510</text>
<text x="1871" y="622" textLength="32" lengthAdjust="spacingAndGlyphs">0.64475</text>
</g>
<rect x="1868" y="500" width="39" height="11" fill="#778899"/><path d="M1866 505.5h2" stroke="#fff"/>
<text x="1871" y="509" font-size="10" fill="#000" textLength="32" lengthAdjust="spacingAndGlyphs">0.64587</text>
<!-- time axis -->
<path stroke="#fff" d="M417.5 654v4M481.5 654v4M545.5 654v4M609.5 654v4M673.5 654v4M737.5 654v4M801.5 654v4M865.5 654v4M929.5 654v4M993.5 654v4M1057.5 654v4M1121.5 654v4M1185.5 654v4M1249.5 654v4M1313.5 654v4M1377.5 654v4M1441.5 654v4M1505.5 654v4M1569.5 654v4M1633.5 654v4M1697.5 654v4M1761.5 654v4M1825.5 654v4"/>
<g font-size="10" fill="#fff">
<text x="353" y="667.5" textLength="44.3" lengthAdjust="spacingAndGlyphs">2 Jun 2025</text>
<text x="417" y="667.5" textLength="47.7" lengthAdjust="spacingAndGlyphs">2 Jun 13:45</text>
<text x="481" y="667.5" textLength="47.7" lengthAdjust="spacingAndGlyphs">2 Jun 14:45</text>
<text x="545" y="667.5" textLength="47.7" lengthAdjust="spacingAndGlyphs">2 Jun 15:45</text>
<text x="609" y="667.5" textLength="47.7" lengthAdjust="spacingAndGlyphs">2 Jun 16:45</text>
<text x="673" y="667.5" textLength="47.7" lengthAdjust="spacingAndGlyphs">2 Jun 17:45</text>
<text x="737" y="667.5" textLength="47.7" lengthAdjust="spacingAndGlyphs">2 Jun 18:45</text>
<text x="801" y="667.5" textLength="47.7" lengthAdjust="spacingAndGlyphs">2 Jun 19:45</text>
<text x="865" y="667.5" textLength="47.7" lengthAdjust="spacingAndGlyphs">2 Jun 20:45</text>
<text x="929" y="667.5" textLength="47.7" lengthAdjust="spacingAndGlyphs">2 Jun 21:45</text>
<text x="993" y="667.5" textLength="47.7" lengthAdjust="spacingAndGlyphs">2 Jun 22:45</text>
<text x="1057" y="667.5" textLength="47.7" lengthAdjust="spacingAndGlyphs">2 Jun 23:45</text>
<text x="1121" y="667.5" textLength="47.7" lengthAdjust="spacingAndGlyphs">3 Jun 00:45</text>
<text x="1185" y="667.5" textLength="47.7" lengthAdjust="spacingAndGlyphs">3 Jun 01:45</text>
<text x="1249" y="667.5" textLength="47.7" lengthAdjust="spacingAndGlyphs">3 Jun 02:45</text>
<text x="1313" y="667.5" textLength="47.7" lengthAdjust="spacingAndGlyphs">3 Jun 03:45</text>
<text x="1377" y="667.5" textLength="47.7" lengthAdjust="spacingAndGlyphs">3 Jun 04:45</text>
<text x="1441" y="667.5" textLength="47.7" lengthAdjust="spacingAndGlyphs">3 Jun 05:45</text>
<text x="1505" y="667.5" textLength="47.7" lengthAdjust="spacingAndGlyphs">3 Jun 06:45</text>
<text x="1569" y="667.5" textLength="47.7" lengthAdjust="spacingAndGlyphs">3 Jun 07:45</text>
<text x="1633" y="667.5" textLength="47.7" lengthAdjust="spacingAndGlyphs">3 Jun 08:45</text>
<text x="1697" y="667.5" textLength="47.7" lengthAdjust="spacingAndGlyphs">3 Jun 09:45</text>
<text x="1761" y="667.5" textLength="47.7" lengthAdjust="spacingAndGlyphs">3 Jun 10:45</text>
<text x="1825" y="667.5" textLength="47.7" lengthAdjust="spacingAndGlyphs">3 Jun 11:45</text>
</g>
<!-- market watch extras -->
<path d="M67.5 93h7l-3.5-4z" fill="#111"/>
<path d="M13 608v9M8.5 612.5h9" stroke="#0a9a1a" stroke-width="1.2" fill="none"/>
<!-- terminal extras -->
<path d="M1898.5 695h7l-3.5-4z" fill="#111"/>
<g fill="none" stroke="#1a6fb5" stroke-width="1.2"><rect x="20.5" y="708.5" width="10" height="13" rx="1.5"/><rect x="20.5" y="728.5" width="10" height="13" rx="1.5"/><rect x="20.5" y="748.5" width="10" height="13" rx="1.5"/><path d="M24 712.5h3M24 716h3M24 732.5h3M24 736h3M24 752.5h3M24 756h3"/></g>
<g stroke="#a4a4a4" stroke-width="2" fill="none"><path d="M1229.5 711.5l6.5 6.5M1236 711.5l-6.5 6.5M1229.5 731.5l6.5 6.5M1236 731.5l-6.5 6.5M1229.5 751.5l6.5 6.5M1236 751.5l-6.5 6.5"/><path d="M1404 711.5l6.5 6.5M1410.5 711.5l-6.5 6.5M1404 731.5l6.5 6.5M1410.5 731.5l-6.5 6.5M1404 751.5l6.5 6.5M1410.5 751.5l-6.5 6.5"/><path d="M1904 711.5l6.5 6.5M1910.5 711.5l-6.5 6.5M1904 731.5l6.5 6.5M1910.5 731.5l-6.5 6.5M1904 751.5l6.5 6.5M1910.5 751.5l-6.5 6.5"/></g>
<circle cx="25" cy="775" r="4.5" fill="none" stroke="#222"/><path d="M22.5 775h5M25 772.5v5" stroke="#222"/>
</svg>
</body></html>
